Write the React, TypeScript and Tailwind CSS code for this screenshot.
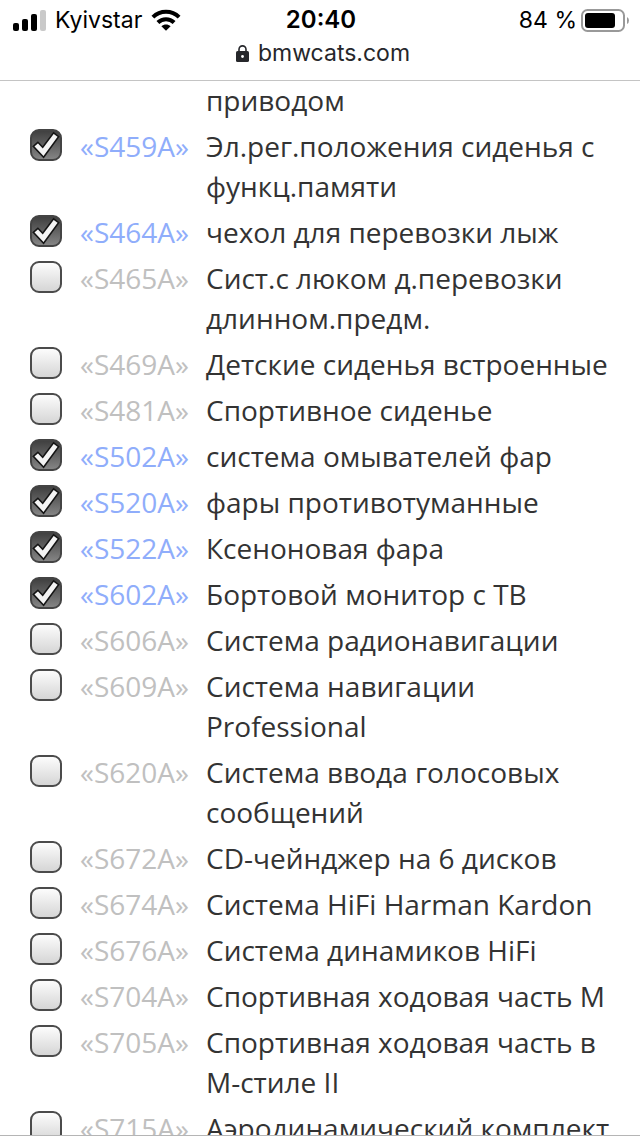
import { useState } from 'react';

type Option = { code: string; name: string; checked: boolean };

const initialOptions: Option[] = [
  { code: 'S459A', name: 'Эл.рег.положения сиденья с функц.памяти', checked: true },
  { code: 'S464A', name: 'чехол для перевозки лыж', checked: true },
  { code: 'S465A', name: 'Сист.с люком д.перевозки длинном.предм.', checked: false },
  { code: 'S469A', name: 'Детские сиденья встроенные', checked: false },
  { code: 'S481A', name: 'Спортивное сиденье', checked: false },
  { code: 'S502A', name: 'система омывателей фар', checked: true },
  { code: 'S520A', name: 'фары противотуманные', checked: true },
  { code: 'S522A', name: 'Ксеноновая фара', checked: true },
  { code: 'S602A', name: 'Бортовой монитор с ТВ', checked: true },
  { code: 'S606A', name: 'Система радионавигации', checked: false },
  { code: 'S609A', name: 'Система навигации Professional', checked: false },
  { code: 'S620A', name: 'Система ввода голосовых сообщений', checked: false },
  { code: 'S672A', name: 'CD-чейнджер на 6 дисков', checked: false },
  { code: 'S674A', name: 'Система HiFi Harman Kardon', checked: false },
  { code: 'S676A', name: 'Система динамиков HiFi', checked: false },
  { code: 'S704A', name: 'Спортивная ходовая часть M', checked: false },
  { code: 'S705A', name: 'Спортивная ходовая часть в M-стиле II', checked: false },
  { code: 'S715A', name: 'Аэродинамический комплект', checked: false },
];

function SignalIcon() {
  return (
    <svg className="h-[21px] w-[33px]" viewBox="0 0 33 21" aria-hidden="true">
      <rect x="0" y="13" width="6" height="8" rx="2" />
      <rect x="9" y="9" width="6" height="12" rx="2" />
      <rect x="18" y="4" width="6" height="17" rx="2" />
      <rect x="27" y="0" width="6" height="21" rx="2" fill="#c9c9c9" />
    </svg>
  );
}

function WifiIcon() {
  return (
    <svg className="h-[22px] w-[30px]" viewBox="0 0 30 22" fill="none" stroke="#000" strokeWidth="4" aria-hidden="true">
      <path d="M1.9 8.2C9.2 1 20.8 1 28.1 8.2" />
      <path d="M6.9 13.5C11.4 9 18.6 9 23.1 13.5" />
      <path d="M10.4 17.2C13 14.9 17 14.9 19.6 17.2L15 21.8Z" fill="#000" stroke="none" />
    </svg>
  );
}

function LockIcon() {
  return (
    <svg className="h-[17px] w-[13px]" viewBox="0 0 13 17" aria-hidden="true">
      <path d="M3 8V4.4a3.5 3.5 0 0 1 7 0V8" fill="none" stroke="#26272b" strokeWidth="1.6" />
      <rect x="0" y="6" width="13" height="11" rx="1.6" fill="#26272b" />
      <circle cx="6.5" cy="11.5" r="1.4" fill="#fff" />
    </svg>
  );
}

function BatteryIcon() {
  return (
    <svg className="h-[23px] w-[48px]" viewBox="0 0 48 23" aria-hidden="true">
      <rect x="1" y="1" width="42" height="21" rx="5.5" fill="none" stroke="#999" strokeWidth="2" />
      <rect x="4" y="4" width="30" height="15" rx="3" />
      <path d="M46 8Q48 9 48 11.5Q48 14 46 15Z" fill="#999" />
    </svg>
  );
}

function OptionRow({ option, onToggle }: { option: Option; onToggle: () => void }) {
  const id = `option-${option.code}`;
  return (
    <li className="grid grid-cols-[50px_126px_1fr] py-[3px]">
      <span className="mt-[3px] grid size-8">
        <input
          id={id}
          type="checkbox"
          checked={option.checked}
          onChange={onToggle}
          className="col-start-1 row-start-1 size-8 appearance-none rounded-[9px] border-2 border-[#4b4b4b] bg-linear-to-b from-white to-[#d3d3d3] bg-origin-border checked:border-[#444] checked:from-[#3c3c3c] checked:to-[#8a8a8a]"
        />
        {option.checked && (
          <svg className="pointer-events-none col-start-1 row-start-1 size-8" viewBox="0 0 32 32" aria-hidden="true">
            <path
              d="M3.3 17.3L7.9 13.3L12.7 18.2L23.6 3.8L28.6 7.7L13.6 28.2Z"
              fill="#f4f4f4"
              stroke="#151515"
              strokeWidth="1.6"
              strokeLinejoin="miter"
            />
          </svg>
        )}
      </span>
      <label htmlFor={id} className={option.checked ? 'text-[#8fadfb]' : 'text-[#c0c0c0]'}>
        «{option.code}»
      </label>
      <label htmlFor={id} className="text-[#333]">
        {option.name}
      </label>
    </li>
  );
}

export default function App() {
  const [options, setOptions] = useState(initialOptions);
  const toggle = (code: string) =>
    setOptions((list) => list.map((o) => (o.code === code ? { ...o, checked: !o.checked } : o)));

  return (
    <div className="flex h-screen flex-col overflow-hidden border-b border-[#b5b5b5] bg-white">
      <header className="shrink-0 border-b border-[#c4c4c4] font-[Inter,sans-serif]">
        <div className="grid h-10 grid-cols-[1fr_auto_1fr] items-center pr-[11px] pl-[13px] text-[23px] text-black">
          <div className="flex items-center gap-[9px]">
            <SignalIcon />
            <span>Kyivstar</span>
            <WifiIcon />
          </div>
          <time className="text-2xl font-semibold">20:40</time>
          <div className="flex items-center justify-end gap-1">
            <span>84 %</span>
            <BatteryIcon />
          </div>
        </div>
        <div className="flex h-10 items-start justify-center gap-[9px] pl-[6px] text-[#26272b]">
          <span className="pt-[5px]">
            <LockIcon />
          </span>
          <span className="text-[23px] leading-[26px]">bmwcats.com</span>
        </div>
      </header>
      <main className="min-h-0 flex-1 overflow-hidden font-['Open_Sans','Noto_Sans',sans-serif] text-[28px] leading-10">
        <ul className="-mt-px pr-6 pl-[30px]">
          <li className="grid grid-cols-[176px_1fr] pb-[3px] text-[#333]">
            <span className="col-start-2">приводом</span>
          </li>
          {options.map((option) => (
            <OptionRow key={option.code} option={option} onToggle={() => toggle(option.code)} />
          ))}
        </ul>
      </main>
    </div>
  );
}
